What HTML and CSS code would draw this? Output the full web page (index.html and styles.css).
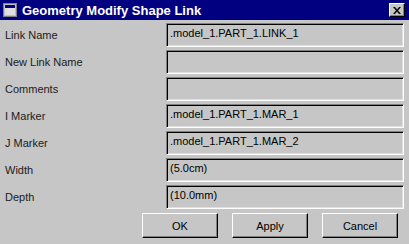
FILE: index.html
```html
<!DOCTYPE html>
<html lang="en">
<head>
    <meta charset="UTF-8">
    <meta name="viewport" content="width=device-width, initial-scale=1.0">
    <title>Geometry Modify Shape Link</title>
    <link rel="stylesheet" href="styles.css">
</head>
<body>
    <div class="dialog">
        <div class="titlebar">
            <svg class="app-icon" width="14" height="14" viewBox="0 0 14 14">
                <rect x="0.5" y="0.5" width="13" height="13" fill="#c0c0c0" stroke="#808080"/>
                <rect x="2" y="2" width="10" height="3" fill="#000080"/>
                <rect x="2" y="5" width="10" height="7" fill="#e0e0e0"/>
            </svg>
            <span class="title">Geometry Modify Shape Link</span>
            <div class="close">
                <svg width="8" height="7" viewBox="0 0 8 7">
                    <path d="M0 0h2l2 2.5 2-2.5h2l-3 3.5 3 3.5h-2l-2-2.5-2 2.5h-2l3-3.5z" fill="#000"/>
                </svg>
            </div>
        </div>
        <div class="form">
            <label>Link Name</label>
            <div class="field">.model_1.PART_1.LINK_1</div>
            <label>New Link Name</label>
            <div class="field"></div>
            <label>Comments</label>
            <div class="field"></div>
            <label>I Marker</label>
            <div class="field">.model_1.PART_1.MAR_1</div>
            <label>J Marker</label>
            <div class="field">.model_1.PART_1.MAR_2</div>
            <label>Width</label>
            <div class="field">(5.0cm)</div>
            <label>Depth</label>
            <div class="field">(10.0mm)</div>
        </div>
        <div class="buttons">
            <button>OK</button>
            <button>Apply</button>
            <button>Cancel</button>
        </div>
    </div>
</body>
</html>
```

FILE: styles.css
```css
body {
    margin: 0;
    font-family: "Liberation Sans", Arial, sans-serif;
    font-size: 11px;
    color: #000;
    background-color: #c0c0c0;
}
.dialog {
    width: 409px;
    height: 244px;
    background-color: #c6c6c6;
}
.titlebar {
    height: 20px;
    display: flex;
    align-items: center;
    padding: 0 4px 0 3px;
    background-color: #000080;
    color: white;
}
.app-icon {
    flex: none;
}
.title {
    margin-left: 5px;
    font-weight: bold;
    font-size: 13px;
    flex: 1;
}
.close {
    width: 14px;
    height: 12px;
    display: flex;
    align-items: center;
    justify-content: center;
    background-color: #c6c6c6;
    border: 1px solid;
    border-color: #fff #000 #000 #fff;
    box-shadow: inset -1px -1px #808080;
}
.form {
    display: grid;
    grid-template-columns: 161px 1fr;
    grid-auto-rows: 24px;
    row-gap: 3px;
    padding: 3px 5px 0 5px;
}
label {
    display: flex;
    align-items: center;
    color: #202020;
}
.field {
    border: 1px solid;
    border-color: #808080 #fff #fff #808080;
    box-shadow: inset 1px 1px #000, inset -1px -1px #dfdfdf;
    padding: 3px 3px 0 3px;
    line-height: 13px;
    background-color: #c6c6c6;
}
.buttons {
    display: flex;
    justify-content: flex-end;
    gap: 14px;
    padding: 4px 11px 0 0;
}
button {
    width: 76px;
    height: 25px;
    font-family: "Liberation Sans", Arial, sans-serif;
    font-size: 11px;
    color: #000;
    background-color: #c6c6c6;
    border: 1px solid;
    border-color: #fff #000 #000 #fff;
    box-shadow: inset -1px -1px #808080;
    padding: 0;
}
```
